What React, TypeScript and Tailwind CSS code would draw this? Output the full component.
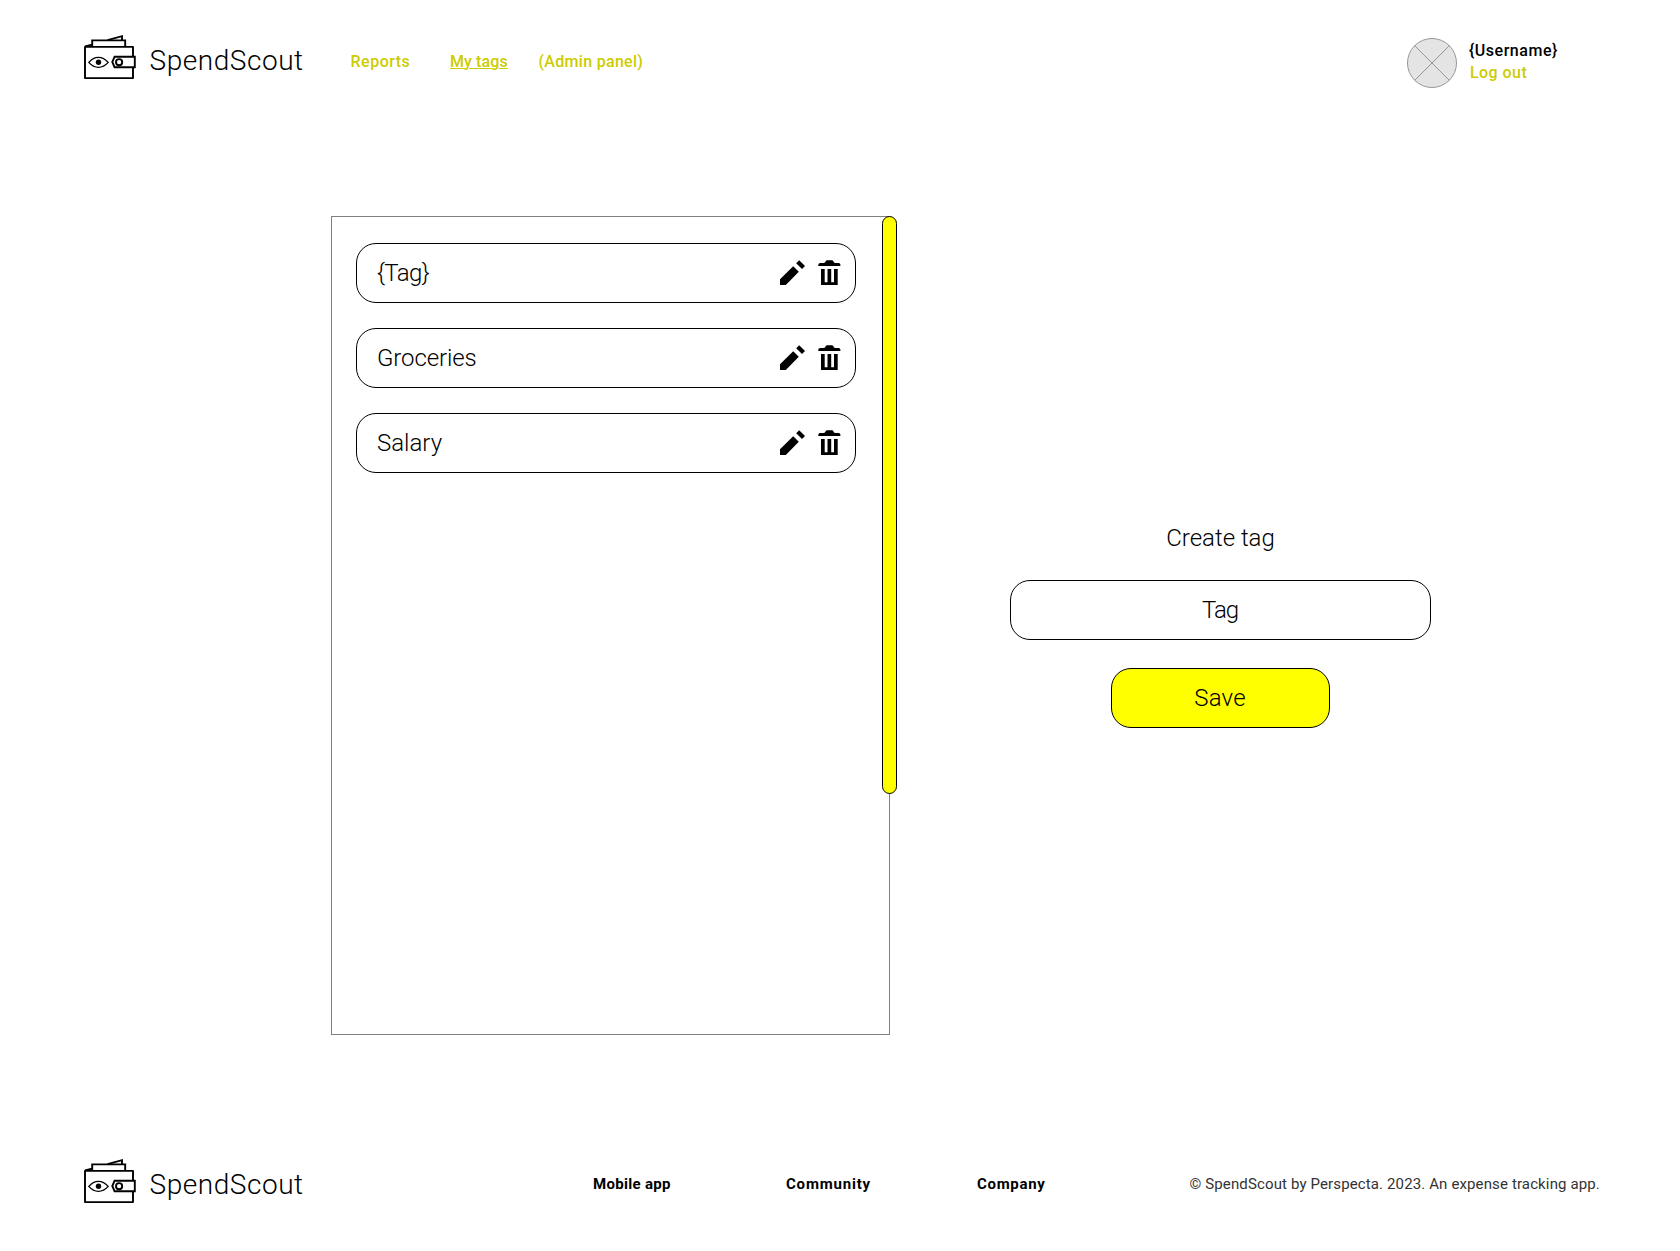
function WalletLogo() {
  return (
    <svg width="54" height="47" viewBox="0 0 54 47" fill="none" stroke="#000" strokeWidth="1.9" className="shrink-0">
      <path d="M49 22.6V12.9H1V44.1H49V34" strokeLinejoin="round" />
      <path d="M1 12.4L8 10.6M8.2 12.5V6.4H41.2V12.5" />
      <path d="M23.5 6.2L38 2.2V6.2" />
      <path d="M30.6 22.7H50.8V33.3H30.6L28.3 28Z" />
      <circle cx="35.1" cy="28.2" r="3.1" />
      <path d="M4.8 28.4C10.5 21.8 18.3 21.8 24.2 28.4C18.3 35 10.5 35 4.8 28.4Z" strokeWidth="1.3" />
      <circle cx="14.5" cy="28.3" r="2.7" fill="#000" stroke="none" />
    </svg>
  );
}

function Brand() {
  return (
    <div className="flex w-[230px]">
      <WalletLogo />
      <span className="ml-[11.5px] mt-[7px] whitespace-nowrap text-[28px] font-light leading-10 tracking-[0.55px]">
        SpendScout
      </span>
    </div>
  );
}

function PencilIcon() {
  return (
    <svg width="25" height="25" viewBox="0 0 25 25" fill="#000" className="shrink-0">
      <path d="M0 19.2L13.2 6.2L18.8 11.8L5.8 25H0Z" />
      <path d="M16.2 3.2L19.2 0.2L25 6L22 9Z" />
    </svg>
  );
}

function TrashIcon() {
  return (
    <svg width="23" height="25" viewBox="0 0 23 25" fill="#000" className="shrink-0">
      <path d="M0.3 6V4.7Q0.3 3.1 2.3 3.1H5.6Q7.5 2.9 7.5 1.5Q7.9 0.2 9.3 0.2H13.7Q15.1 0.2 15.5 1.5Q15.5 2.9 17.4 3.1H20.7Q22.4 3.1 22.4 4.7V6Z" />
      <path d="M3 9H6.7V22.3H9.5V9H13.2V22.3H16V9H19.7V25H3Z" />
    </svg>
  );
}

function TagRow({ name, spacing }: { name: string; spacing: string }) {
  return (
    <li className="flex h-[60px] w-[500px] items-center rounded-[20px] border border-black pl-[20px] pr-[14.5px]">
      <span className={`grow text-2xl font-light ${spacing}`}>{name}</span>
      <button aria-label="Edit" className="-mt-px">
        <PencilIcon />
      </button>
      <button aria-label="Delete" className="-mt-px ml-[12.5px]">
        <TrashIcon />
      </button>
    </li>
  );
}

function Avatar() {
  return (
    <svg width="50" height="50" viewBox="0 0 50 50" fill="none" stroke="#979797" className="shrink-0">
      <circle cx="25" cy="25" r="24.5" fill="#e4e4e4" />
      <path d="M7.7 7.7L42.3 42.3M42.3 7.7L7.7 42.3" />
    </svg>
  );
}

export default function App() {
  return (
    <div className="flex h-[1251px] w-[1680px] flex-col overflow-hidden bg-white font-['Roboto',sans-serif] text-black">
      <header className="flex h-[216px] shrink-0 items-start pl-[84px] pt-[34px]">
        <Brand />
        <nav className="ml-[36.5px] mt-4 flex whitespace-nowrap text-base font-medium text-[#cccc00]">
          <a className="w-[99.5px] tracking-[0.5px]">Reports</a>
          <a className="w-[88.5px]">
            <span className="tracking-[0.1px] underline decoration-1 underline-offset-[1px]">My tags</span>
          </a>
          <a className="tracking-[0.3px]">(Admin panel)</a>
        </nav>
        <div className="ml-auto mt-1 flex w-[273px]">
          <Avatar />
          <div className="ml-3 mt-[2px] whitespace-nowrap text-base font-medium leading-[22px]">
            <p className="tracking-[0.55px]">{"{Username}"}</p>
            <a className="ml-px block tracking-[0.45px] text-[#cccc00]">Log out</a>
          </div>
        </div>
      </header>

      <main className="flex h-[908px] shrink-0 pl-[331px]">
        <section className="relative h-[819px] w-[559px] border border-[#808080] pl-[24px] pt-[26px]">
          <ul className="flex flex-col gap-[25px]">
            <TagRow name="{Tag}" spacing="tracking-[-0.6px]" />
            <TagRow name="Groceries" spacing="tracking-[-0.1px]" />
            <TagRow name="Salary" spacing="tracking-[0px]" />
          </ul>
          <div className="absolute -right-2 -top-px h-[578px] w-[15px] rounded-full border border-black bg-[#ffff00]" />
        </section>
        <section className="ml-[120px] mt-[302px] flex w-[421px] flex-col items-center text-2xl font-light">
          <h2 className="leading-[40px] tracking-[0px]">Create tag</h2>
          <div className="mt-[22px] flex h-[60px] w-full items-center justify-center rounded-[20px] border border-black pr-px tracking-[-1px]">
            Tag
          </div>
          <button className="mt-7 h-[60px] w-[219px] rounded-[20px] border border-black bg-[#ffff00] pr-px tracking-[0.2px]">
            Save
          </button>
        </section>
      </main>

      <footer className="flex items-start whitespace-nowrap pl-[84px] pt-[34px] text-[15px]">
        <Brand />
        <nav className="ml-[279px] mt-[15px] flex font-bold">
          <a className="w-[193px] tracking-[0.3px]">Mobile app</a>
          <a className="w-[191px] tracking-[0.8px]">Community</a>
          <a className="w-[212.5px] tracking-[0.7px]">Company</a>
        </nav>
        <p className="mt-[15px] tracking-[0.13px] text-[#333]">
          © SpendScout by Perspecta. 2023. An expense tracking app.
        </p>
      </footer>
    </div>
  );
}
